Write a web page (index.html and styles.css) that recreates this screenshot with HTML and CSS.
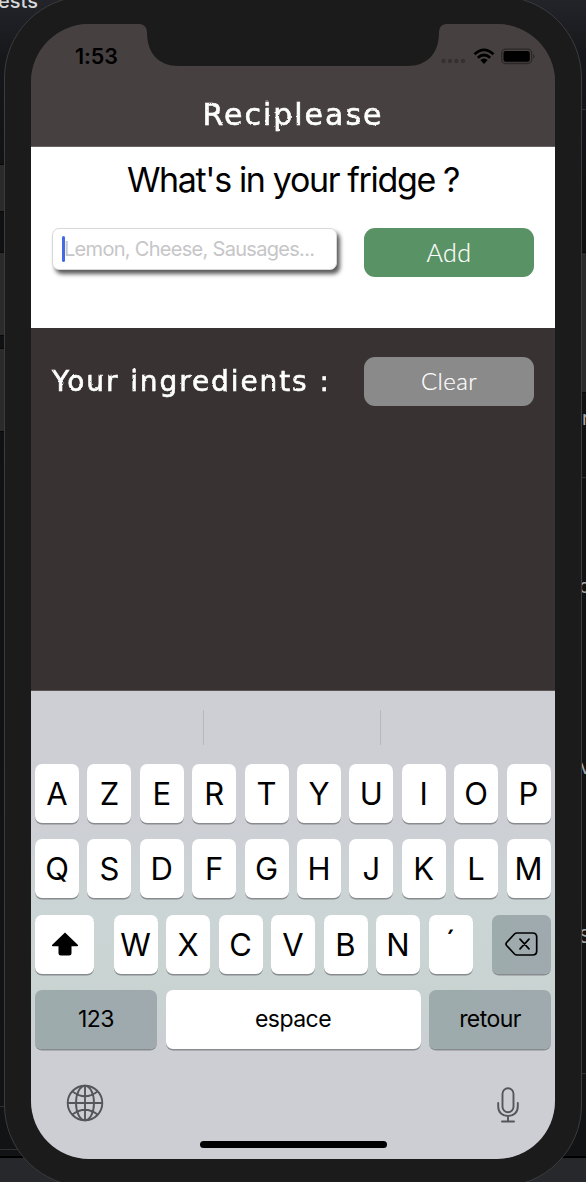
FILE: index.html
```
<!DOCTYPE html>
<html lang="fr">
<head>
<meta charset="utf-8">
<title>Reciplease</title>
<link rel="stylesheet" href="styles.css">
</head>
<body>
<div class="desktop">
  <div class="backdrop">
    <span class="bg-text bg-tests">ests</span>
    <span class="dock"></span>
    <span class="side-button mute"></span>
    <span class="side-button vol-up"></span>
    <span class="side-button vol-down"></span>
    <span class="side-button power"></span>
    <span class="bg-text bg-r1">r</span>
    <span class="bg-text bg-r2">o</span>
    <span class="bg-text bg-r3">v</span>
    <span class="bg-text bg-r4">S</span>
    <span class="rule rule-a"></span>
    <span class="rule rule-b"></span>
    <span class="rule rule-c"></span>
    <span class="rule rule-d"></span>
    <span class="rule rule-e"></span>
  </div>
  <div class="phone">
    <main class="screen">
      <header class="header">
        <svg class="notch" width="310" height="43" viewBox="0 0 310 43"><path d="M0 0V1C6 1 8.500 3.500 9 9C9 30 20 43 41 43H269C290 43 301 30 301 9C301.500 3.500 304 1 310 1V0Z" fill="#1b1b1b"/></svg>
        <div class="status">
          <span class="time">1:53</span>
          <div class="indicators">
            <svg width="25" height="6" viewBox="0 0 25 6" fill="#343130"><circle cx="2.500" cy="3" r="2.200"/><circle cx="9" cy="3" r="2.200"/><circle cx="15.500" cy="3" r="2.200"/><circle cx="22" cy="3" r="2.200"/></svg>
            <svg class="wifi" width="22" height="17" viewBox="0 0 22 17"><path d="M1.500 6.200Q11-2.400 20.500 6.200M4.800 9.800Q11 4.300 17.200 9.800" fill="none" stroke="#000" stroke-width="2.800"/><path d="M7.300 12Q11 9 14.700 12L11 16Z"/></svg>
            <svg class="battery" width="35" height="17" viewBox="0 0 35 17"><rect x=".7" y="1.200" width="30" height="14.300" rx="4" fill="none" stroke="#2b2827" stroke-width="1.300"/><rect x="2.500" y="3" width="26.300" height="10.700" rx="2"/><path d="M32.300 6Q35 8.300 32.300 11Z" fill="#2b2827"/></svg>
          </div>
        </div>
        <h1 class="chalk title">Reciplease</h1>
      </header>
      <section class="fridge">
        <h2 class="question">What's in your fridge ?</h2>
        <div class="row">
          <div class="field"><span class="caret"></span><span class="placeholder">Lemon, Cheese, Sausages...</span></div>
          <div class="button add">Add</div>
        </div>
      </section>
      <section class="ingredients">
        <h2 class="chalk list-title">Your ingredients :</h2>
        <div class="button clear">Clear</div>
      </section>
      <section class="keyboard">
        <div class="suggestions"><span></span><span></span><span></span></div>
        <div class="keys">
          <div class="key-row"><b>A</b><b>Z</b><b>E</b><b>R</b><b>T</b><b>Y</b><b>U</b><b>I</b><b>O</b><b>P</b></div>
          <div class="key-row"><b>Q</b><b>S</b><b>D</b><b>F</b><b>G</b><b>H</b><b>J</b><b>K</b><b>L</b><b>M</b></div>
          <div class="key-row third">
            <b><svg width="28" height="24" viewBox="0 0 28 24"><path d="M14 .5L27 13Q27.500 14.300 26 14.300H20.500V21Q20.500 23.500 18 23.500H10Q7.500 23.500 7.500 21V14.300H2Q.5 14.300 1 13Z"/></svg></b>
            <div class="letters"><b>W</b><b>X</b><b>C</b><b>V</b><b>B</b><b>N</b><b class="accent">´</b></div>
            <b class="dark"><svg width="33" height="24" viewBox="0 0 33 24" fill="none" stroke="#000" stroke-width="1.700" stroke-linecap="round" stroke-linejoin="round"><path d="M12 1H27.500Q31.700 1 31.700 5V19Q31.700 23 27.500 23H12Q10.500 23 9.500 22L1.600 13.500Q.3 12 1.600 10.500L9.500 2Q10.500 1 12 1ZM15 7.200L24 16.800M24 7.200L15 16.800"/></svg></b>
          </div>
          <div class="key-row fourth"><b class="dark">123</b><b>espace</b><b class="dark">retour</b></div>
        </div>
        <div class="tools">
          <svg width="38" height="38" viewBox="0 0 38 38" fill="none" stroke="#54565b" stroke-width="1.900"><circle cx="19" cy="19" r="17.300"/><ellipse cx="19" cy="19" rx="9" ry="17.300"/><path d="M19 1.700V36.300M1.700 19H36.300M6.500 7.500Q19 17 31.500 7.500M6.500 30.500Q19 21 31.500 30.500"/></svg>
          <svg class="mic" width="22" height="36" viewBox="0 0 22 36" fill="none" stroke="#54565b" stroke-width="1.900" stroke-linecap="round"><rect x="5.500" y="1.200" width="11" height="24" rx="5.500"/><path d="M1.200 16V19.500C1.200 25.500 5.500 29 11 29S20.800 25.500 20.800 19.500V16M11 29V34.500M5 34.500H17"/></svg>
        </div>
        <div class="home"></div>
      </section>
    </main>
  </div>
</div>
<svg class="defs" width="0" height="0"><filter id="chalk"><feTurbulence type="fractalNoise" baseFrequency="0.3" numOctaves="2" seed="4"/><feDisplacementMap in="SourceGraphic" scale="2" xChannelSelector="R" yChannelSelector="G"/></filter></svg>
</body>
</html>
```
FILE: styles.css
```
* { box-sizing: border-box; }
body { margin: 0; width: 586px; height: 1182px; overflow: hidden; font-family: Inter, "Liberation Sans", sans-serif; }
.desktop { position: relative; width: 586px; height: 1182px; overflow: hidden; padding-left: 4px; background: linear-gradient(#22242a 0, #15171a 60px, #101113 200px, #121314 1100px); }
.backdrop, .defs { position: absolute; top: 0; left: 0; }
.backdrop span { position: absolute; }
.bg-text { color: #aaa; font-size: 19px; line-height: 24px; }
.bg-text.bg-tests { left: -2px; top: -11px; color: #d6d7d9; font-size: 20px; font-weight: 500; }
.bg-r1 { left: 582px; top: 407px; }
.bg-r2 { left: 579px; top: 575px; }
.bg-r3 { left: 580px; top: 756px; }
.bg-r4 { left: 579px; top: 925px; }
.dock { left: 0; top: 1156px; width: 586px; height: 26px; background: #27282c; border-top: 2px solid #000; }
.side-button { width: 8px; background: #2b2b2b; border: 1px solid #090909; }
.mute { left: -2px; top: 164px; height: 48px; }
.vol-up { left: -2px; top: 252px; height: 84px; }
.vol-down { left: -2px; top: 348px; height: 84px; }
.power { left: 580px; top: 252px; height: 141px; }
.rule { height: 1px; background: #303134; }
.rule-a { left: 582px; top: 109px; width: 4px; }
.rule-b { left: 582px; top: 477px; width: 4px; }
.rule-c { left: 582px; top: 1073px; width: 4px; }
.rule-d { left: 0; top: 1106px; width: 6px; }
.rule-e { left: 0; top: 1149px; width: 20px; }
.phone { position: relative; width: 578px; height: 1191px; margin-top: -4px; padding: 27px 25px 27px 26px; border: 1px solid #3c3c3e; border-radius: 82px; background: #1b1b1b; }
.screen { display: flex; flex-direction: column; width: 524px; height: 1135px; overflow: hidden; border-radius: 58px; background: #383332; }
.header { position: relative; height: 123px; flex: none; background: #464140; border-bottom: 1px solid #686463; }
.notch { position: absolute; left: 107px; top: -1px; }
.status { display: flex; justify-content: space-between; padding: 20px 19px 0 44px; height: 65px; }
.time { font-size: 21.500px; line-height: 24px; font-weight: 600; letter-spacing: -.1px; }
.indicators { display: flex; align-items: flex-start; padding-top: 3px; }
.indicators svg:first-child { margin-top: 11px; }
.wifi { margin-left: 7px; margin-top: 1px; }
.battery { margin-left: 6px; margin-top: 1px; }
.chalk { margin: 0; color: #fff; font-family: Chalkduster, "DejaVu Sans", sans-serif; font-weight: 400; white-space: nowrap; -webkit-text-stroke: .6px #fff; filter: url(#chalk); }
.title { font-size: 30px; line-height: 52px; letter-spacing: 2px; text-align: center; }
.fridge { height: 181px; flex: none; background: #fff; padding: 10px 21px 0; }
.question { margin: 0; height: 71px; font-size: 34px; line-height: 46px; font-weight: 400; letter-spacing: -1.350px; text-align: center; white-space: nowrap; }
.row { display: flex; justify-content: space-between; align-items: flex-start; }
.field { display: flex; align-items: center; width: 285px; height: 42px; padding-left: 9px; border: 1px solid #d8d8d8; border-radius: 7px; background: #fff; box-shadow: 3px 4px 4px rgba(0,0,0,.65); }
.caret { width: 3px; height: 26px; border-radius: 2px; background: #4169e8; margin-top: -1px; }
.placeholder { margin-left: -1px; margin-top: -1px; color: #c6c6c8; font-size: 20px; letter-spacing: -.7px; white-space: nowrap; }
.button { width: 170px; height: 49px; border-radius: 11px; color: #fff; font: 300 25px/48px Lato, sans-serif; text-align: center; -webkit-text-stroke: .2px #fff; }
.add { background: #599264; letter-spacing: .4px; }
.clear { background: #8a8a8a; font-size: 24px; letter-spacing: .4px; }
.ingredients { height: 363px; flex: none; display: flex; justify-content: space-between; align-items: flex-start; padding: 29px 21px 0; border-bottom: 1px solid #5b5352; }
.list-title { font-size: 28px; line-height: 50px; letter-spacing: 1.900px; }
.keyboard { display: flex; flex-direction: column; flex: 1; padding: 19px 4px 0; background: linear-gradient(#cdcfd5, #cdcfd5 28%, #cbd5d5 48%, #c9d3d2 64%, #ccced4 78%, #cdced4); }
.suggestions { height: 53.500px; flex: none; display: flex; }
.suggestions span { width: 177px; height: 35px; border-right: 1px solid #b6b8be; }
.suggestions span:last-child { border: 0; }
.suggestions span:first-child { width: 169px; }
.suggestions { justify-content: flex-start; }
.suggestions span { flex: none; }
.suggestions span:last-child { flex: 1; }
.keys { display: grid; grid-template-rows: repeat(4, 59px); row-gap: 16.500px; }
.key-row { display: grid; grid-template-columns: repeat(10, 44px); column-gap: 8.400px; }
.key-row b { display: flex; align-items: center; justify-content: center; height: 59px; border-radius: 7px; background: #fff; box-shadow: 0 1.500px 0 #898c8e; font-size: 31px; font-weight: 400; color: #000; }
.key-row .dark { background: linear-gradient(90deg, #9dabac, #9fa9ae); }
.third { grid-template-columns: 59px 359px 59px; column-gap: 19.500px; }
.letters { display: grid; grid-template-columns: repeat(7, 44px); column-gap: 8.500px; }
.fourth { grid-template-columns: 122px 255px 122px; column-gap: 8.500px; }
.fourth b { font-size: 23px; letter-spacing: -.55px; padding-bottom: 1px; }
.key-row .accent { padding-bottom: 6px; }
.tools { display: flex; justify-content: space-between; align-items: flex-start; padding: 35px 32px 0 31px; height: 91.500px; flex: none; }
.mic { margin-top: 3px; }
.home { width: 187px; height: 7px; flex: none; align-self: center; border-radius: 4px; background: #000; }
```
